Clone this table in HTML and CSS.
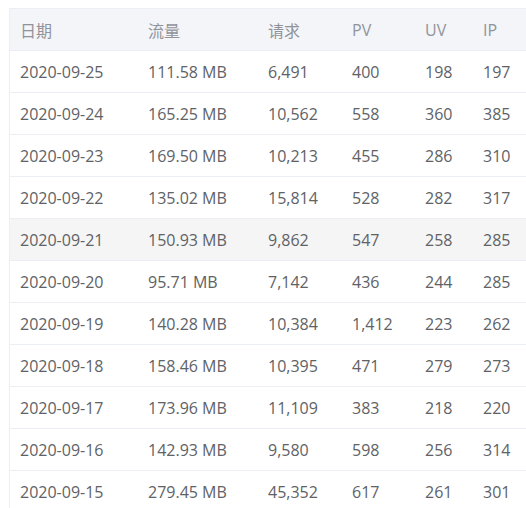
FILE: index.html
```html
<!DOCTYPE html>
<html lang="zh">
<head>
<meta charset="utf-8">
<link rel="stylesheet" href="styles.css">
</head>
<body>
<div class="wrap">
<table class="stats">
<colgroup>
<col class="c-date"><col class="c-flow"><col class="c-req"><col class="c-pv"><col class="c-uv"><col class="c-ip">
</colgroup>
<thead>
<tr><th>日期</th><th>流量</th><th>请求</th><th>PV</th><th>UV</th><th>IP</th></tr>
</thead>
<tbody>
<tr><td>2020-09-25</td><td>111.58 MB</td><td>6,491</td><td>400</td><td>198</td><td>197</td></tr>
<tr><td>2020-09-24</td><td>165.25 MB</td><td>10,562</td><td>558</td><td>360</td><td>385</td></tr>
<tr><td>2020-09-23</td><td>169.50 MB</td><td>10,213</td><td>455</td><td>286</td><td>310</td></tr>
<tr><td>2020-09-22</td><td>135.02 MB</td><td>15,814</td><td>528</td><td>282</td><td>317</td></tr>
<tr class="hover"><td>2020-09-21</td><td>150.93 MB</td><td>9,862</td><td>547</td><td>258</td><td>285</td></tr>
<tr><td>2020-09-20</td><td>95.71 MB</td><td>7,142</td><td>436</td><td>244</td><td>285</td></tr>
<tr><td>2020-09-19</td><td>140.28 MB</td><td>10,384</td><td>1,412</td><td>223</td><td>262</td></tr>
<tr><td>2020-09-18</td><td>158.46 MB</td><td>10,395</td><td>471</td><td>279</td><td>273</td></tr>
<tr><td>2020-09-17</td><td>173.96 MB</td><td>11,109</td><td>383</td><td>218</td><td>220</td></tr>
<tr><td>2020-09-16</td><td>142.93 MB</td><td>9,580</td><td>598</td><td>256</td><td>314</td></tr>
<tr><td>2020-09-15</td><td>279.45 MB</td><td>45,352</td><td>617</td><td>261</td><td>301</td></tr>
</tbody>
</table>
</div>
</body>
</html>
```
FILE: styles.css
```css
html, body {
  margin: 0;
  padding: 0;
  background: #fff;
  overflow: hidden;
}
body {
  font-family: "Open Sans", "Noto Sans CJK SC", sans-serif;
  font-size: 16px;
  color: #606266;
}
.wrap {
  padding: 8px 0 0 9px;
}
.stats {
  border-collapse: separate;
  border-spacing: 0;
  table-layout: fixed;
  width: 540px;
  border-top: 1px solid #ebeef5;
  border-left: 1px solid #ebeef5;
}
.c-date { width: 128px; }
.c-flow { width: 120px; }
.c-req { width: 84px; }
.c-pv { width: 73px; }
.c-uv { width: 58px; }
.c-ip { width: 77px; }
.stats th,
.stats td {
  height: 41px;
  padding: 0 0 0 10px;
  text-align: left;
  vertical-align: middle;
  border-bottom: 1px solid #ebeef5;
  white-space: nowrap;
  font-weight: normal;
}
.stats th {
  background: #f3f5f9;
  color: #909399;
  height: 41px;
}
.stats tr.hover td {
  background: #f5f5f5;
}
```
